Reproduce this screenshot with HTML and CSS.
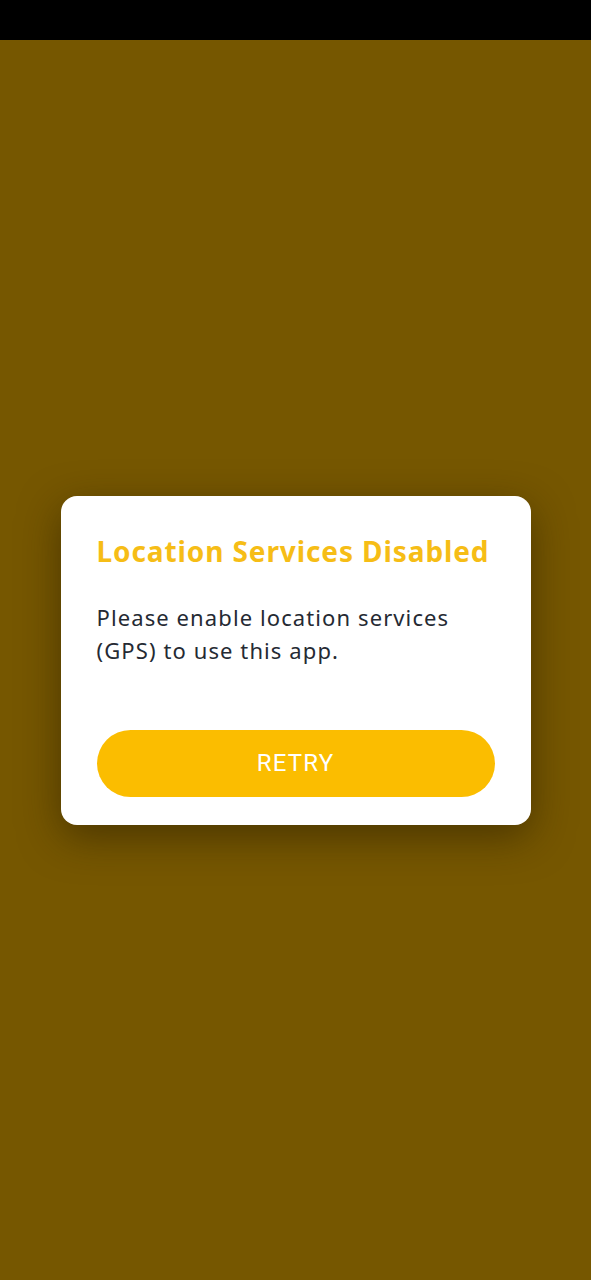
FILE: index.html
```html
<!DOCTYPE html>
<html lang="en">
<head>
<meta charset="utf-8">
<link rel="stylesheet" href="styles.css">
<title>Location Services Disabled</title>
</head>
<body>
<div class="status-bar"></div>
<main class="screen">
  <section class="dialog">
    <h1 class="dialog-title">Location Services Disabled</h1>
    <p class="dialog-text">Please enable location services (GPS) to use this app.</p>
    <button class="retry-btn" type="button">RETRY</button>
  </section>
</main>
</body>
</html>
```
FILE: styles.css
```css
html, body {
  margin: 0;
  padding: 0;
  height: 100%;
}
body {
  display: flex;
  flex-direction: column;
  background: #765700;
  font-family: "Noto Sans", sans-serif;
}
.status-bar {
  height: 40px;
  background: #000;
  flex: none;
}
.screen {
  flex: 1;
  display: flex;
  align-items: center;
  justify-content: center;
  padding: 0 60px;
}
.dialog {
  width: 470px;
  box-sizing: border-box;
  background: #fff;
  border-radius: 16px;
  padding: 37px 36px 28px;
  box-shadow: 0 12px 40px rgba(40, 28, 0, 0.55);
}
.dialog-title {
  margin: 0;
  color: #f6bd16;
  font-size: 28px;
  font-weight: 700;
  line-height: 36px;
  letter-spacing: 0.9px;
}
.dialog-text {
  margin: 32px 0 0;
  color: #252a33;
  font-size: 22px;
  line-height: 33px;
  letter-spacing: 1.1px;
  padding-right: 20px;
}
.retry-btn {
  display: block;
  width: 100%;
  height: 67px;
  margin-top: 63px;
  border: none;
  border-radius: 34px;
  background: #fbbd00;
  color: #fff;
  font-family: Roboto, "Liberation Sans", sans-serif;
  font-size: 24px;
  letter-spacing: 1.2px;
}
```
